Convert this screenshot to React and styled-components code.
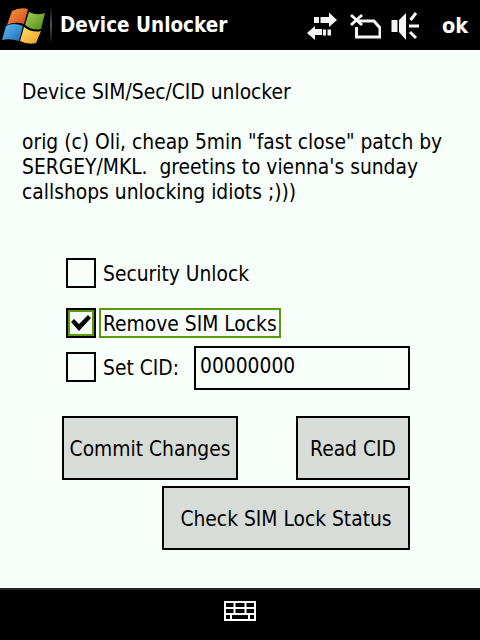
import React from 'react';
import styled, { createGlobalStyle } from 'styled-components';

const Global = createGlobalStyle`
  html, body { margin: 0; padding: 0; background: #000; }
  * { box-sizing: border-box; }
`;
const FONT = '"DejaVu Sans Condensed", "DejaVu Sans", sans-serif';
const Screen = styled.div`
  width: 480px; height: 640px; display: flex; flex-direction: column;
  font-family: ${FONT}; color: #000; overflow: hidden;
`;
const TopBar = styled.header`
  height: 50px; flex: none; background: #000; color: #fff; display: flex; align-items: center;
`;
const Logo = styled.svg`width: 50px; height: 50px; flex: none; display: block;`;
const Divider = styled.div`width: 2px; height: 38px; background: linear-gradient(#000, #555 50%, #000); flex: none;`;
const Title = styled.h1`
  margin: 0 0 0 8px; font: bold 20.5px ${FONT}; flex: 1; white-space: nowrap;
`;
const StatusIcon = styled.svg`width: ${p => p.$w}px; height: 50px; flex: none; display: block; margin-left: ${p => p.$gap || 0}px;`;
const Ok = styled.span`font: bold 21.5px ${FONT}; width: 26px; margin: 0 12px 0 22px; white-space: nowrap;`;
const Content = styled.main`
  flex: 1; background: #f8fefa; padding: 30px 22px 0;
`;
const Text = styled.p`margin: ${p => p.$mt || 0}px 0 0; font-size: 20.8px; line-height: 25px; white-space: pre-wrap;`;
const Form = styled.div`display: flex; flex-direction: column; margin: 53px 0 0 44px; width: 344px;`;
const CheckRow = styled.div`display: flex; align-items: center; margin-top: ${p => p.$mt || 0}px;`;
const Box = styled.div`
  width: 30px; height: 30px; flex: none; border: 2px solid #000; background: #f8fefa;
  display: flex; align-items: center; justify-content: center;
  outline: ${p => p.$focus ? '2px solid #5b9a0a' : 'none'}; outline-offset: -4px;
  margin-bottom: ${p => p.$lift ? 2 : 0}px;
`;
const Label = styled.span`
  font-size: 20.8px; line-height: 26px; white-space: nowrap; margin-left: 7px; padding-top: 2px;
  margin-bottom: ${p => p.$lift ? 2 : 0}px;
`;
const FocusLabel = styled(Label)`
  margin-left: 3px; padding: 2px 2px 0; height: 30px; display: flex; align-items: center;
  border: 2px solid #5b9a0a;
`;
const Field = styled.div`
  width: 216px; height: 44px; border: 2px solid #000; background: #f8fefa; margin-left: auto;
  font-size: 20.8px; line-height: 36px; padding: 0 4px; flex: none;
`;
const Buttons = styled.div`display: flex; flex-direction: column; gap: 6px; margin: 26px 0 0 -4px; width: 348px;`;
const BtnRow = styled.div`display: flex; justify-content: ${p => p.$end ? 'flex-end' : 'space-between'};`;
const Btn = styled.button`
  width: ${p => p.$w}px; height: 64px; background: #d8dcd8; border: 2px solid #000; border-radius: 0;
  font: 20.8px ${FONT}; color: #000; padding: 2px 0 0; white-space: nowrap;
`;
const BottomBar = styled.footer`
  height: 52px; flex: none; background: #000; border-top: 2px solid #222; display: flex; justify-content: center; padding-top: 11px;
`;
const Kbd = styled.svg`width: 32px; height: 20px; display: block;`;

export default function App() {
  return (
    <Screen>
      <Global />
      <TopBar>
        <Logo viewBox="0 0 50 50">
          <defs>
            <linearGradient id="r" x1="0" y1="0" x2="1" y2="1"><stop offset="0" stopColor="#f0a040" /><stop offset="1" stopColor="#d8401c" /></linearGradient>
            <linearGradient id="g" x1="0" y1="0" x2="1" y2="1"><stop offset="0" stopColor="#a8d050" /><stop offset="1" stopColor="#4c8c1c" /></linearGradient>
            <linearGradient id="b" x1="0" y1="0" x2="1" y2="1"><stop offset="0" stopColor="#60c0f0" /><stop offset="1" stopColor="#1c68b8" /></linearGradient>
            <linearGradient id="y" x1="0" y1="0" x2="1" y2="1"><stop offset="0" stopColor="#fce070" /><stop offset="1" stopColor="#f0a020" /></linearGradient>
          </defs>
          <path d="M12 11Q20 7 28 9L24 24Q15 21 7 25Z" fill="url(#r)" />
          <path d="M29 12Q37 16 45 13L41 29Q33 31 25 25Z" fill="url(#g)" />
          <path d="M6 26Q14 22 23 26L19 41Q10 38 2 40Z" fill="url(#b)" />
          <path d="M24 27Q32 33 41 31L36 43Q28 45 20 41Z" fill="url(#y)" />
        </Logo>
        <Divider />
        <Title>Device Unlocker</Title>
        <StatusIcon $w={30} viewBox="308 0 30 50">
          <g fill="#f4f8f4">
            <path d="M338 20l-8-7.500v4.500h-7v6h7v4z" />
            <path d="M315 17h5v6h-5zM321.500 17h3v6h-3z" />
            <path d="M308 33l8-7v3h7v6h-7v5z" />
            <path d="M324 29.500h3v6h-3zM328.500 29.500h3.500v6h-3.500z" />
          </g>
        </StatusIcon>
        <StatusIcon $w={31} $gap={13} viewBox="351 0 31 50">
          <g fill="none" stroke="#f4f8f4" strokeWidth="3">
            <path d="M352 15l11 10M363 15l-11 10" />
            <path d="M359 21h16l6 7v9h-23.500v-10" />
          </g>
        </StatusIcon>
        <StatusIcon $w={29} $gap={10} viewBox="392 0 29 50">
          <g fill="#f4f8f4"><path d="M392.500 20h6v12h-6zM400 20l7-7v27l-7-8z" /></g>
          <g stroke="#f4f8f4" strokeWidth="3" fill="none"><path d="M411.500 20l5.500-7M410 26h10M411 32l6 6" /></g>
        </StatusIcon>
        <Ok>ok</Ok>
      </TopBar>
      <Content>
        <Text>Device SIM/Sec/CID unlocker</Text>
        <Text $mt={25}>orig (c) Oli, cheap 5min "fast close" patch by{'\n'}SERGEY/MKL.  greetins to vienna's sunday{'\n'}callshops unlocking idiots ;)))</Text>
        <Form>
          <CheckRow><Box /><Label>Security Unlock</Label></CheckRow>
          <CheckRow $mt={20}>
            <Box $focus>
              <svg width="22" height="20" viewBox="0 0 22 20"><path d="M1 9l3-3 5 5L18 2l3 3L9 18z" fill="#000" /></svg>
            </Box>
            <FocusLabel>Remove SIM Locks</FocusLabel>
          </CheckRow>
          <CheckRow $mt={8}><Box $lift /><Label $lift>Set CID:</Label><Field>00000000</Field></CheckRow>
          <Buttons>
            <BtnRow><Btn $w={176}>Commit Changes</Btn><Btn $w={114}>Read CID</Btn></BtnRow>
            <BtnRow $end><Btn $w={248}>Check SIM Lock Status</Btn></BtnRow>
          </Buttons>
        </Form>
      </Content>
      <BottomBar>
        <Kbd viewBox="0 0 32 20">
          <g fill="none" stroke="#fff" strokeWidth="2"><rect x="1" y="1" width="30" height="18" /><path d="M1 7h30M1 13h30M10.500 1v12M21.500 1v12M7 13v6M25 13v6" /></g>
        </Kbd>
      </BottomBar>
    </Screen>
  );
}
